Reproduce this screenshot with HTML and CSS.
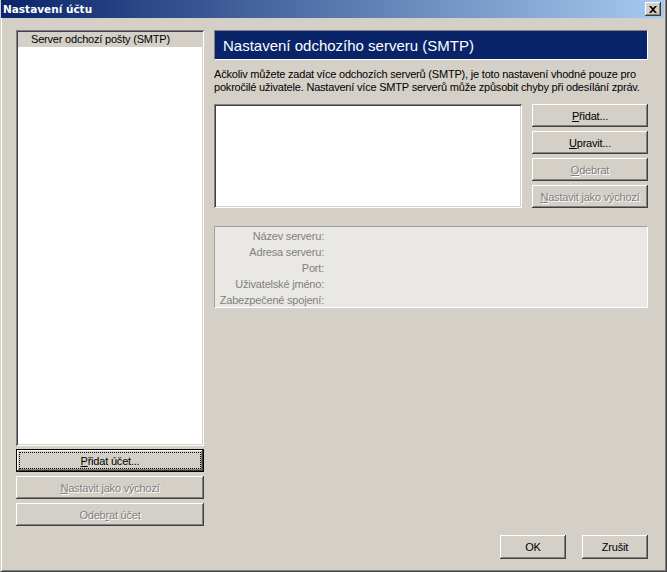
FILE: index.html
```html
<!DOCTYPE html>
<html lang="cs">
<head>
<meta charset="utf-8">
<title>Nastavení účtu</title>
<link rel="stylesheet" href="styles.css">
</head>
<body>
<div class="window">
  <div class="titlebar">
    <span class="title">Nastavení účtu</span>
    <span class="close"><svg width="8" height="7" viewBox="0 0 8 7"><path d="M0 0h2l2 2 2-2h2L5 3.5 8 7H6L4 5 2 7H0l3-3.5z" fill="#000"/></svg></span>
  </div>
  <div class="content">
    <div class="leftcol">
      <div class="listbox accounts">
        <div class="item">Server odchozí pošty (SMTP)</div>
      </div>
      <button class="btn default"><span class="focus"><u>P</u>řidat účet...</span></button>
      <button class="btn disabled"><u>N</u>astavit jako výchozí</button>
      <button class="btn disabled">Odeb<u>r</u>at účet</button>
    </div>
    <div class="rightcol">
      <div class="header">Nastavení odchozího serveru (SMTP)</div>
      <p class="desc">Ačkoliv můžete zadat více odchozích serverů (SMTP), je toto nastavení vhodné pouze pro pokročilé uživatele. Nastavení více SMTP serverů může způsobit chyby při odesílání zpráv.</p>
      <div class="serverrow">
        <div class="listbox servers"></div>
        <div class="btncol">
          <button class="btn"><u>P</u>řidat...</button>
          <button class="btn"><u>U</u>pravit...</button>
          <button class="btn disabled"><u>O</u>debrat</button>
          <button class="btn disabled"><u>N</u>astavit jako výchozí</button>
        </div>
      </div>
      <div class="details">
        <div class="drow"><span class="lbl">Název serveru:</span></div>
        <div class="drow"><span class="lbl">Adresa serveru:</span></div>
        <div class="drow"><span class="lbl">Port:</span></div>
        <div class="drow"><span class="lbl">Uživatelské jméno:</span></div>
        <div class="drow"><span class="lbl">Zabezpečené spojení:</span></div>
      </div>
    </div>
  </div>
  <div class="footer">
    <button class="btn ok">OK</button>
    <button class="btn ok">Zrušit</button>
  </div>
</div>
</body>
</html>
```

FILE: styles.css
```css
* { box-sizing: border-box; }
html, body { margin: 0; padding: 0; }
body {
  width: 667px;
  height: 572px;
  background: #d4d0c8;
  font-family: "Liberation Sans", Arial, sans-serif;
  font-size: 11px;
  letter-spacing: -0.2px;
  color: #000;
  overflow: hidden;
}
.window {
  width: 667px;
  height: 572px;
  display: flex;
  flex-direction: column;
  background: #d4d0c8;
  border-left: 1px solid #d4d0c8;
  border-right: 1px solid #404040;
  border-bottom: 1px solid #404040;
  box-shadow: inset 1px 0 #fff, inset -1px -1px #808080;
}
.titlebar {
  height: 18px;
  flex: none;
  margin-right: 2px;
  display: flex;
  align-items: center;
  justify-content: space-between;
  background: linear-gradient(to right, #0a246a, #a6caf0);
  padding: 0 3px 0 2px;
}
.title {
  color: #fff;
  font-weight: bold;
  font-family: "DejaVu Sans", sans-serif;
  font-size: 10.5px;
  letter-spacing: 0;
}
.close {
  width: 16px;
  height: 14px;
  background: #d4d0c8;
  display: flex;
  align-items: center;
  justify-content: center;
  box-shadow: inset -1px -1px #404040, inset 1px 1px #fff, inset -2px -2px #808080;
}
.content {
  flex: 1;
  display: flex;
  gap: 10px;
  padding: 12px 0 0 15px;
}
.leftcol {
  width: 188px;
  display: flex;
  flex-direction: column;
}
.listbox {
  background: #fff;
  box-shadow: inset 1px 1px #808080, inset -1px -1px #fff, inset 2px 2px #404040, inset -2px -2px #d4d0c8;
  padding: 2px;
}
.accounts {
  height: 416px;
  flex: none;
  margin-bottom: 3px;
}
.item {
  background: #d4d0c8;
  height: 15px;
  line-height: 15px;
  padding-left: 13px;
}
.btn {
  display: flex;
  align-items: center;
  justify-content: center;
  flex: none;
  height: 23px;
  width: 100%;
  border: none;
  padding: 0;
  margin: 0;
  background: #d4d0c8;
  font-family: inherit;
  font-size: 11px;
  letter-spacing: -0.2px;
  color: #000;
  box-shadow: inset -1px -1px #404040, inset 1px 1px #fff, inset -2px -2px #808080, inset 2px 2px #d4d0c8;
}
.leftcol .btn { margin-bottom: 4px; }
.btn.default {
  border: 1px solid #000;
  box-shadow: inset -1px -1px #404040, inset 1px 1px #fff, inset -2px -2px #808080;
}
.focus {
  display: flex;
  align-items: center;
  justify-content: center;
  width: calc(100% - 6px);
  height: 15px;
  outline: 1px dotted #000;
}
.btn.disabled {
  color: #808080;
  text-shadow: 1px 1px #fff;
}
.rightcol {
  width: 434px;
  display: flex;
  flex-direction: column;
}
.header {
  height: 30px;
  flex: none;
  background: #0a246a;
  color: #fff;
  font-size: 15px;
  letter-spacing: 0;
  padding-left: 8px;
  display: flex;
  align-items: center;
  border-top: 1px solid #808080;
  border-left: 1px solid #808080;
  border-right: 1px solid #fff;
  border-bottom: 1px solid #fff;
}
.desc {
  margin: 8px 0 0 0;
  line-height: 13px;
  height: 36px;
}
.serverrow {
  display: flex;
  gap: 10px;
}
.servers {
  width: 308px;
  height: 104px;
}
.btncol {
  width: 116px;
  display: flex;
  flex-direction: column;
  gap: 4px;
}
.details {
  margin-top: 18px;
  height: 82px;
  background: #eae8e4;
  border-top: 1px solid #a0a0a0;
  border-left: 1px solid #a0a0a0;
  border-right: 1px solid #fff;
  border-bottom: 1px solid #fff;
  padding-top: 1px;
}
.drow {
  height: 16px;
  display: flex;
  align-items: center;
}
.lbl {
  width: 109px;
  text-align: right;
  color: #808080;
}
.footer {
  flex: none;
  display: flex;
  justify-content: flex-end;
  gap: 16px;
  padding: 0 18px 12px 0;
}
.btn.ok {
  width: 66px;
  height: 24px;
}
```
